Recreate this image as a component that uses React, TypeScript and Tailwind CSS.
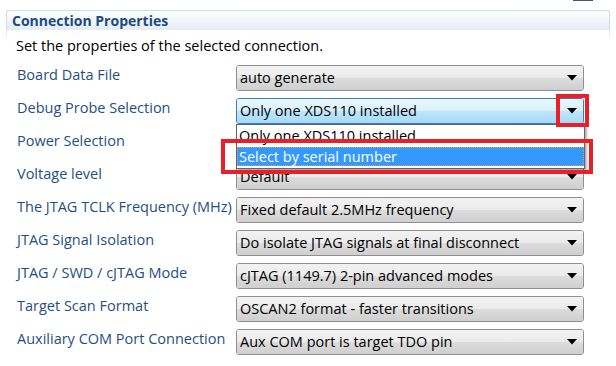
import React from "react";

type Row = { label: string; value: string; active?: boolean };

const ROWS: Row[] = [
  { label: "Board Data File", value: "auto generate" },
  { label: "Debug Probe Selection", value: "Only one XDS110 installed", active: true },
  { label: "Power Selection", value: "" },
  { label: "Voltage level", value: "Default" },
  { label: "The JTAG TCLK Frequency (MHz)", value: "Fixed default 2.5MHz frequency" },
  { label: "JTAG Signal Isolation", value: "Do isolate JTAG signals at final disconnect" },
  { label: "JTAG / SWD / cJTAG Mode", value: "cJTAG (1149.7) 2-pin advanced modes" },
  { label: "Target Scan Format", value: "OSCAN2 format - faster transitions" },
  { label: "Auxiliary COM Port Connection", value: "Aux COM port is target TDO pin" },
];

function Arrow() {
  return (
    <svg width="10" height="6" viewBox="0 0 10 6" className="shrink-0">
      <path d="M0 0 H10 L5 5.5 Z" fill="#000" />
    </svg>
  );
}

function Combo({ value, active }: { value: string; active?: boolean }) {
  return (
    <div
      className={
        "relative flex items-center w-[348px] h-[26px] rounded-[3px] border overflow-hidden " +
        (active ? "border-[#3c7fb1]" : "border-[#8e8f8f]")
      }
    >
      <div className="absolute inset-0 flex flex-col">
        <div
          className={
            "h-1/2 bg-gradient-to-b " +
            (active ? "from-[#eaf6fd] to-[#d9f0fc]" : "from-[#f2f2f2] to-[#ebebeb]")
          }
        />
        <div
          className={
            "h-1/2 bg-gradient-to-b " +
            (active ? "from-[#bee6fd] to-[#a7d9f5]" : "from-[#dddddd] to-[#cfcfcf]")
          }
        />
      </div>
      <span className="relative flex-1 pl-[3px] text-[14.5px] text-black whitespace-nowrap">{value}</span>
      <span className="relative pr-[6px]">
        <Arrow />
      </span>
    </div>
  );
}

export default function App() {
  return (
    <div
      className="relative w-[616px] h-[366px] overflow-hidden bg-white"
      style={{ fontFamily: "'Open Sans', 'Noto Sans', sans-serif" }}
    >
      <div className="absolute left-[573px] top-0 w-[20px] h-[1px] bg-[#555]" />

      <div className="pt-[10px] px-[6px]">
        <div className="h-[20px] rounded-t-[3px] border-t border-x border-[#d3dbe6] bg-gradient-to-b from-white to-[#e5ebf4]">
          <div className="px-[5px] pt-[1px] text-[14px] font-bold text-[#194c7f] leading-[18px]">
            Connection Properties
          </div>
        </div>
        <div className="h-[6px] border-x border-[#e6ebf2]" />
      </div>

      <div className="pl-[16px] h-[20px] text-[14.5px] text-black leading-[20px]">
        Set the properties of the selected connection.
      </div>

      <div className="flex flex-col mt-[9px]">
        {ROWS.map((r) => (
          <div key={r.label} className="flex h-[33px]">
            <div className="w-[236px] pl-[17px] text-[14.5px] text-[#1f4f82] leading-[20px] whitespace-nowrap">
              {r.label}
            </div>
            <Combo value={r.value} active={r.active} />
          </div>
        ))}
      </div>

      <div className="absolute left-[236px] top-[124px] w-[349px] h-[45px] bg-white border border-[#646464] shadow-[2px_2px_2px_rgba(0,0,0,0.3)] overflow-hidden">
        <div className="h-[22px] pl-[2px] pt-[1px] text-[14.5px] leading-[20px] whitespace-nowrap">
          Only one XDS110 installed
        </div>
        <div className="h-[19px] bg-[#3399ff] border border-dotted border-[#e0a050] text-white text-[14.5px] leading-[17px] pl-[1px] whitespace-nowrap">
          Select by serial number
        </div>
      </div>

      <div className="absolute left-[556px] top-[94px] w-[33px] h-[33px] border-4 border-[#e8202a]" />
      <div className="absolute left-[221px] top-[139px] w-[372px] h-[35px] border-4 border-[#e8202a]" />
    </div>
  );
}
